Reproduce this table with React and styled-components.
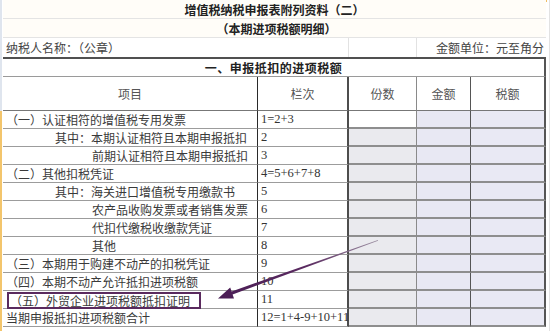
import React from 'react';
import styled, { createGlobalStyle } from 'styled-components';

const GlobalStyle = createGlobalStyle`
  html, body { margin: 0; padding: 0; background: #ffffff; }
  body { font-family: "Noto Sans CJK SC", "Noto Sans", sans-serif; }
`;

const COLS = '255px 91px 68px 54px 75px';

const Page = styled.div`
  position: relative;
  width: 554px;
  height: 331px;
  overflow: hidden;
  box-sizing: border-box;
  padding-left: 3px;
  background:
    linear-gradient(#f0bd62, #f0bd62) 347px 0 / 200px 2px no-repeat,
    linear-gradient(to bottom, #dfe5ee 0 111px, #f3c56c 111px) 0 0 / 2px 100% no-repeat,
    linear-gradient(#e2e2e2, #e2e2e2) 549px 0 / 1px 100% no-repeat,
    #ffffff;
  color: #3a3a3a;
  font-size: 12px;
`;

const Sheet = styled.div`
  width: 543px;
`;

const TitleRow = styled.div`
  height: 19px;
  box-sizing: border-box;
  border-bottom: 1px solid #e4e4e4;
  background: #fffdf8;
  display: flex;
  align-items: center;
  justify-content: center;
  font-weight: 700;
  color: #222;
  padding-left: ${p => p.$shift || 0}px;
`;

const InfoRow = styled.div`
  display: grid;
  grid-template-columns: ${COLS};
  height: 19px;
`;

const InfoCell = styled.div`
  grid-column: span ${p => p.$span || 1};
  display: flex;
  align-items: center;
  justify-content: ${p => (p.$right ? 'flex-end' : 'flex-start')};
  padding: 0 2px 0 3px;
  border-right: ${p => (p.$grid ? '1px solid #e2e2e2' : 'none')};
  white-space: nowrap;
  color: #444;
`;

const Table = styled.div`
  display: grid;
  grid-template-columns: ${COLS};
  border-top: 2px solid #505050;
`;

const SectionCell = styled.div`
  grid-column: 1 / -1;
  height: 18px;
  box-sizing: border-box;
  border-bottom: 1px solid #9a9a9a;
  border-right: 2px solid #555;
  display: flex;
  align-items: center;
  justify-content: center;
  font-weight: 700;
  color: #222;
  letter-spacing: 0.5px;
`;

const lineFor = kind =>
  ({
    dark: '1px solid #2a2a2a',
    thick: '2px solid #4d4d4d',
    light: '1px solid #8a8a8a',
    mid: '1px solid #555',
    edge: '2px solid #555',
  }[kind]);

const HeadCell = styled.div`
  height: 34px;
  box-sizing: border-box;
  border-bottom: 1px solid #777;
  border-right: ${p => lineFor(p.$line)};
  display: flex;
  align-items: center;
  justify-content: center;
  color: #555;
`;

const ItemCell = styled.div`
  height: 18px;
  box-sizing: border-box;
  border-bottom: 1px solid #9c9c9c;
  border-right: ${lineFor('dark')};
  padding-left: ${p => 3 + (p.$indent || 0)}px;
  display: flex;
  align-items: center;
  white-space: nowrap;
  color: #3a3a3a;
`;

const CodeCell = styled.div`
  height: 18px;
  box-sizing: border-box;
  border-bottom: 1px solid #9c9c9c;
  border-right: ${lineFor('thick')};
  padding-left: 3px;
  display: flex;
  align-items: center;
  white-space: nowrap;
  font-family: "Liberation Serif", serif;
  font-size: 12.5px;
  color: #333;
`;

const ValueCell = styled.div`
  height: 18px;
  box-sizing: border-box;
  border-bottom: 2px solid #8e8e8e;
  border-right: ${p => lineFor(p.$line)};
  background: ${p => (p.$blank ? '#ffffff' : p.$tone)};
`;

const Marked = styled.span`
  display: inline-flex;
  align-items: center;
  height: 17px;
  box-sizing: border-box;
  margin-left: 1px;
  margin-top: 2px;
  padding: 0 9px 0 1px;
  border: 2px solid #5a2a5e;
`;

const Overlay = styled.svg`
  position: absolute;
  left: 0;
  top: 0;
  width: 554px;
  height: 331px;
  pointer-events: none;
`;

const rows = [
  { item: '（一）认证相符的增值税专用发票', indent: 0, code: '1=2+3', blankCount: true },
  { item: '其中：本期认证相符且本期申报抵扣', indent: 49, code: '2' },
  { item: '前期认证相符且本期申报抵扣', indent: 86, code: '3' },
  { item: '（二）其他扣税凭证', indent: 0, code: '4=5+6+7+8' },
  { item: '其中：海关进口增值税专用缴款书', indent: 49, code: '5' },
  { item: '农产品收购发票或者销售发票', indent: 86, code: '6' },
  { item: '代扣代缴税收缴款凭证', indent: 86, code: '7' },
  { item: '其他', indent: 86, code: '8' },
  { item: '（三）本期用于购建不动产的扣税凭证', indent: 0, code: '9' },
  { item: '（四）本期不动产允许抵扣进项税额', indent: 0, code: '10' },
  { item: '（五）外贸企业进项税额抵扣证明', indent: 0, code: '11', marked: true },
  { item: '当期申报抵扣进项税额合计', indent: 0, code: '12=1+4-9+10+11' },
];

function Arrow() {
  // tapered shaft from (378,240) to arrow tip at (218,298)
  const pts = [
    [378.1, 240.8],
    [232.6, 294.4],
    [234.0, 298.4],
    [218, 298.5],
    [230.2, 287.6],
    [231.6, 291.4],
    [377.9, 240.1],
  ]
    .map(p => p.join(','))
    .join(' ');
  return (
    <Overlay viewBox="0 0 554 331">
      <defs>
        <linearGradient id="arrowInk" gradientUnits="userSpaceOnUse" x1="378" y1="240" x2="218" y2="298">
          <stop offset="0" stopColor="#9c90a2" />
          <stop offset="0.45" stopColor="#5a2a60" />
          <stop offset="1" stopColor="#4a1d55" />
        </linearGradient>
      </defs>
      <polygon points={pts} fill="url(#arrowInk)" />
    </Overlay>
  );
}

export default function App() {
  return (
    <Page>
      <GlobalStyle />
      <Sheet>
        <TitleRow>增值税纳税申报表附列资料（二）</TitleRow>
        <TitleRow $shift={4}>（本期进项税额明细）</TitleRow>
        <InfoRow>
          <InfoCell $span={2} $grid>纳税人名称：（公章）</InfoCell>
          <InfoCell $grid />
          <InfoCell $span={2} $right>金额单位：元至角分</InfoCell>
        </InfoRow>
        <Table>
          <SectionCell>一、申报抵扣的进项税额</SectionCell>
          <HeadCell $line="dark">项目</HeadCell>
          <HeadCell $line="thick">栏次</HeadCell>
          <HeadCell $line="light">份数</HeadCell>
          <HeadCell $line="mid">金额</HeadCell>
          <HeadCell $line="edge">税额</HeadCell>
          {rows.map(r => (
            <React.Fragment key={r.code}>
              <ItemCell $indent={r.indent}>
                {r.marked ? <Marked>{r.item}</Marked> : r.item}
              </ItemCell>
              <CodeCell>{r.code}</CodeCell>
              <ValueCell $line="light" $tone="#eaeaee" $blank={r.blankCount} />
              <ValueCell $line="mid" $tone="#e8e8f3" />
              <ValueCell $line="edge" $tone="#e9e9f4" />
            </React.Fragment>
          ))}
        </Table>
      </Sheet>
      <Arrow />
    </Page>
  );
}
